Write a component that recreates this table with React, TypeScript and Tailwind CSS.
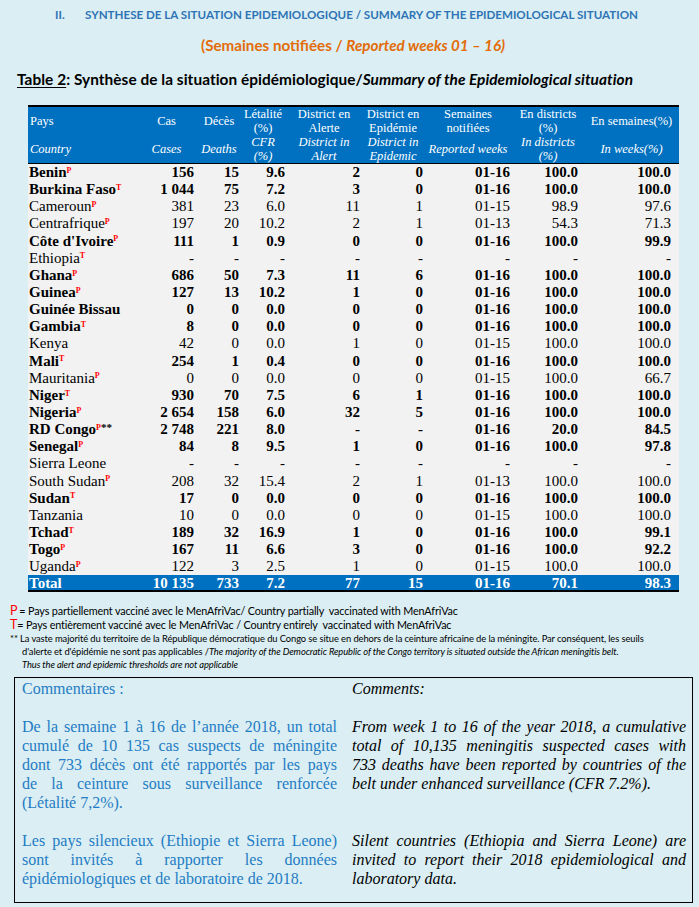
import React from 'react'

type Row = {
  name: string
  sup?: string
  stars?: boolean
  bold?: boolean
  v: string[]
}

const rows: Row[] = [
  { name: 'Benin', sup: 'P', bold: true, v: ['156', '15', '9.6', '2', '0', '01-16', '100.0', '100.0'] },
  { name: 'Burkina Faso', sup: 'T', bold: true, v: ['1 044', '75', '7.2', '3', '0', '01-16', '100.0', '100.0'] },
  { name: 'Cameroun', sup: 'P', v: ['381', '23', '6.0', '11', '1', '01-15', '98.9', '97.6'] },
  { name: 'Centrafrique', sup: 'P', v: ['197', '20', '10.2', '2', '1', '01-13', '54.3', '71.3'] },
  { name: "Côte d'Ivoire", sup: 'P', bold: true, v: ['111', '1', '0.9', '0', '0', '01-16', '100.0', '99.9'] },
  { name: 'Ethiopia', sup: 'T', v: ['-', '-', '-', '-', '-', '-', '-', '-'] },
  { name: 'Ghana', sup: 'P', bold: true, v: ['686', '50', '7.3', '11', '6', '01-16', '100.0', '100.0'] },
  { name: 'Guinea', sup: 'P', bold: true, v: ['127', '13', '10.2', '1', '0', '01-16', '100.0', '100.0'] },
  { name: 'Guinée Bissau', bold: true, v: ['0', '0', '0.0', '0', '0', '01-16', '100.0', '100.0'] },
  { name: 'Gambia', sup: 'T', bold: true, v: ['8', '0', '0.0', '0', '0', '01-16', '100.0', '100.0'] },
  { name: 'Kenya', v: ['42', '0', '0.0', '1', '0', '01-15', '100.0', '100.0'] },
  { name: 'Mali', sup: 'T', bold: true, v: ['254', '1', '0.4', '0', '0', '01-16', '100.0', '100.0'] },
  { name: 'Mauritania', sup: 'P', v: ['0', '0', '0.0', '0', '0', '01-15', '100.0', '66.7'] },
  { name: 'Niger', sup: 'T', bold: true, v: ['930', '70', '7.5', '6', '1', '01-16', '100.0', '100.0'] },
  { name: 'Nigeria', sup: 'P', bold: true, v: ['2 654', '158', '6.0', '32', '5', '01-16', '100.0', '100.0'] },
  { name: 'RD Congo', sup: 'P', stars: true, bold: true, v: ['2 748', '221', '8.0', '-', '-', '01-16', '20.0', '84.5'] },
  { name: 'Senegal', sup: 'P', bold: true, v: ['84', '8', '9.5', '1', '0', '01-16', '100.0', '97.8'] },
  { name: 'Sierra Leone', v: ['-', '-', '-', '-', '-', '-', '-', '-'] },
  { name: 'South Sudan', sup: 'P', v: ['208', '32', '15.4', '2', '1', '01-13', '100.0', '100.0'] },
  { name: 'Sudan', sup: 'T', bold: true, v: ['17', '0', '0.0', '0', '0', '01-16', '100.0', '100.0'] },
  { name: 'Tanzania', v: ['10', '0', '0.0', '0', '0', '01-15', '100.0', '100.0'] },
  { name: 'Tchad', sup: 'T', bold: true, v: ['189', '32', '16.9', '1', '0', '01-16', '100.0', '99.1'] },
  { name: 'Togo', sup: 'P', bold: true, v: ['167', '11', '6.6', '3', '0', '01-16', '100.0', '92.2'] },
  { name: 'Uganda', sup: 'P', v: ['122', '3', '2.5', '1', '0', '01-15', '100.0', '100.0'] },
]

// right padding for each numeric column
const pads = ['pr-[4px]', 'pr-[1px]', 'pr-[1px]', 'pr-[2px]', 'pr-[1px]', 'pr-[2px]', 'pr-[6px]', 'pr-[8px]']

const cols = 'grid grid-cols-[115px_55px_42px_46px_76px_62px_88px_72px_95px]'
const serif = "font-['Liberation_Serif',serif]"
const calibri = "font-['Lato',sans-serif]"

function Line({ children, last }: { children: React.ReactNode; last?: boolean }) {
  return (
    <div className={last ? 'whitespace-nowrap' : 'text-justify [text-align-last:justify] whitespace-nowrap'}>
      {children}
    </div>
  )
}

export default function App() {
  return (
    <div className="w-[699px] min-h-[907px] bg-[#daeef3] overflow-hidden">
      {/* Section heading */}
      <div className={`h-[30px] flex items-center text-[11.6px] font-bold text-[#2e74b5] ${calibri}`}>
        <span className="ml-[55px] w-[30px]">II.</span>
        <span>SYNTHESE DE LA SITUATION EPIDEMIOLOGIQUE / SUMMARY OF THE EPIDEMIOLOGICAL SITUATION</span>
      </div>

      <div className={`h-[30px] flex items-center justify-center text-[15.2px] font-bold text-[#e36c09] ${calibri}`}>
        <span className="ml-[7px]">
          (Semaines notifiées / <i>Reported weeks 01 – 16)</i>
        </span>
      </div>

      <div className={`mt-[10px] h-[20px] flex items-center pl-[17px] text-[15.4px] font-bold text-black tracking-[0.05px] ${calibri}`}>
        <span className="underline underline-offset-2">Table 2</span>
        <span>: Synthèse de la situation épidémiologique/<i>Summary of the Epidemiological situation</i></span>
      </div>

      {/* Table */}
      <div className={`mt-[15px] ml-[28px] w-[651px] ${serif}`}>
        <div className="bg-[#0070c0] border-t-2 border-b border-black text-white text-[12.5px] leading-[14px]">
          <div className={`${cols} h-[28px] items-center`}>
            <div className="pl-[2px]">Pays</div>
            <div className="text-center pr-[8px]">Cas</div>
            <div className="text-center">Décès</div>
            <div className="text-center">Létalité<br />(%)</div>
            <div className="text-center">District en<br />Alerte</div>
            <div className="text-center">District en<br />Epidémie</div>
            <div className="text-center">Semaines<br />notifiées</div>
            <div className="text-center">En districts<br />(%)</div>
            <div className="text-center">En semaines(%)</div>
          </div>
          <div className={`${cols} h-[28px] items-center italic`}>
            <div className="pl-[2px]">Country</div>
            <div className="text-center pr-[8px]">Cases</div>
            <div className="text-center">Deaths</div>
            <div className="text-center">CFR<br />(%)</div>
            <div className="text-center">District in<br />Alert</div>
            <div className="text-center">District in<br />Epidemic</div>
            <div className="text-center">Reported weeks</div>
            <div className="text-center">In districts<br />(%)</div>
            <div className="text-center">In weeks(%)</div>
          </div>
        </div>

        <div className="bg-[#f2f2f2] text-black text-[15px] leading-[17px]">
          {rows.map((r) => (
            <div key={r.name} className={`${cols} h-[17.15px] items-center ${r.bold ? 'font-bold' : ''}`}>
              <div className="pl-[1px] whitespace-nowrap">
                {r.name}
                {r.sup && (
                  <sup className="text-[8px] font-bold text-[#ff0000] top-[-0.55em]">{r.sup}</sup>
                )}
                {r.stars && <sup className="text-[11px] top-[-0.3em]">**</sup>}
              </div>
              {r.v.map((x, i) => (
                <div key={i} className={`text-right ${pads[i]}`}>
                  {x}
                </div>
              ))}
            </div>
          ))}
        </div>

        <div className={`${cols} h-[17px] items-center bg-[#0070c0] border-b-2 border-black text-white font-bold text-[15px] leading-[17px]`}>
          <div className="pl-[1px]">Total</div>
          {['10 135', '733', '7.2', '77', '15', '01-16', '70.1', '98.3'].map((x, i) => (
            <div key={i} className={`text-right ${pads[i]}`}>
              {x}
            </div>
          ))}
        </div>
      </div>

      {/* Legend */}
      <div className={`mt-[12px] pl-[10px] text-black ${calibri}`}>
        <div className="h-[14px] flex items-center text-[10.8px] tracking-[-0.15px] whitespace-nowrap">
          <span className="text-[#ff0000] text-[12.5px] mr-[2px]">P</span>= Pays partiellement vacciné avec le MenAfriVac/ Country partially&nbsp; vaccinated with MenAfriVac
        </div>
        <div className="h-[14px] flex items-center text-[10.8px] tracking-[-0.15px] whitespace-nowrap">
          <span className="text-[#ff0000] text-[12.5px]">T</span>= Pays entièrement vacciné avec le MenAfriVac / Country entirely&nbsp; vaccinated with MenAfriVac
        </div>
        <div className="text-[9.4px] leading-[13px] tracking-[-0.1px] whitespace-nowrap">
          <div>
            ** La vaste majorité du territoire de la République démocratique du Congo se situe en dehors de la ceinture africaine de la méningite. Par conséquent, les seuils
          </div>
          <div className="pl-[12px]">
            d'alerte et d'épidémie ne sont pas applicables /<i>The majority of the Democratic Republic of the Congo territory is situated outside the African meningitis belt.</i>
          </div>
          <div className="pl-[12px] italic">Thus the alert and epidemic thresholds are not applicable</div>
        </div>
      </div>

      {/* Comments box */}
      <div className={`mt-[6px] ml-[14px] w-[679px] h-[226px] border border-black pt-[1px] pl-[7px] ${serif} text-[16px] leading-[19px]`}>
        <div className="grid grid-cols-[315px_334px] gap-x-[15px]">
          <div className="text-[#1f7cc4]">
            <div>Commentaires :</div>
            <div className="mt-[19px]">
              <Line>De la semaine 1 à 16 de l’année 2018, un total</Line>
              <Line>cumulé de 10 135 cas suspects de méningite</Line>
              <Line>dont 733 décès ont été rapportés par les pays</Line>
              <Line>de la ceinture sous surveillance renforcée</Line>
              <Line last>(Létalité 7,2%).</Line>
            </div>
            <div className="mt-[19px]">
              <Line>Les pays silencieux (Ethiopie et Sierra Leone)</Line>
              <Line>sont invités à rapporter les données</Line>
              <Line last>épidémiologiques et de laboratoire de 2018.</Line>
            </div>
          </div>
          <div className="text-black italic">
            <div>Comments:</div>
            <div className="mt-[19px] h-[95px]">
              <Line>From week 1 to 16 of the year 2018, a cumulative</Line>
              <Line>total of 10,135 meningitis suspected cases with</Line>
              <Line>733 deaths have been reported by countries of the</Line>
              <Line last>belt under enhanced surveillance (CFR 7.2%).</Line>
            </div>
            <div className="mt-[19px]">
              <Line>Silent countries (Ethiopia and Sierra Leone) are</Line>
              <Line>invited to report their 2018 epidemiological and</Line>
              <Line last>laboratory data.</Line>
            </div>
          </div>
        </div>
      </div>
    </div>
  )
}
